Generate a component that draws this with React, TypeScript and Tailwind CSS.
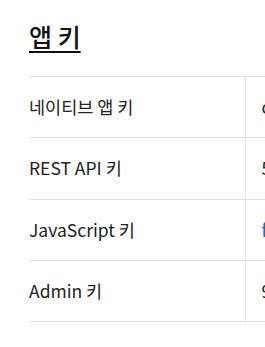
export default function App() {
  const rows = [
    { label: "네이티브 앱 키", value: "c3a1f0d2b7e84a96b1c5d8e2f4a7b9c0", blue: false },
    { label: "REST API 키", value: "5d8e2f4a7b9c0c3a1f0d2b7e84a96b1c", blue: false },
    { label: "JavaScript 키", value: "f0d2b7e84a96b1c5d8e2f4a7b9c0c3a1", blue: true },
    { label: "Admin 키", value: "9c0c3a1f0d2b7e84a96b1c5d8e2f4a7b", blue: false },
  ];
  return (
    <div
      className="w-[265px] h-[347px] overflow-hidden bg-white pl-[29px] pt-[19px]"
      style={{ fontFamily: '"Noto Sans CJK KR", "Noto Sans", sans-serif' }}
    >
      <h2 className="text-[25px] leading-[34px] font-medium text-[#111] underline decoration-2 underline-offset-[4px] whitespace-nowrap">
        앱 키
      </h2>
      <table className="mt-[23px] border-collapse border-t border-[#e1e1e1] whitespace-nowrap">
        <tbody>
          {rows.map((r) => (
            <tr key={r.label} className="border-b border-[#e1e1e1] h-[61.3px]">
              <td className="w-[216px] min-w-[216px] p-0 text-[17.5px] text-[#222] align-middle border-r border-[#e1e1e1]">
                {r.label}
              </td>
              <td
                className={`pl-[16px] text-[17.5px] align-middle ${
                  r.blue ? "text-[#1a5fb4]" : "text-[#222]"
                }`}
              >
                {r.value}
              </td>
            </tr>
          ))}
        </tbody>
      </table>
    </div>
  );
}
